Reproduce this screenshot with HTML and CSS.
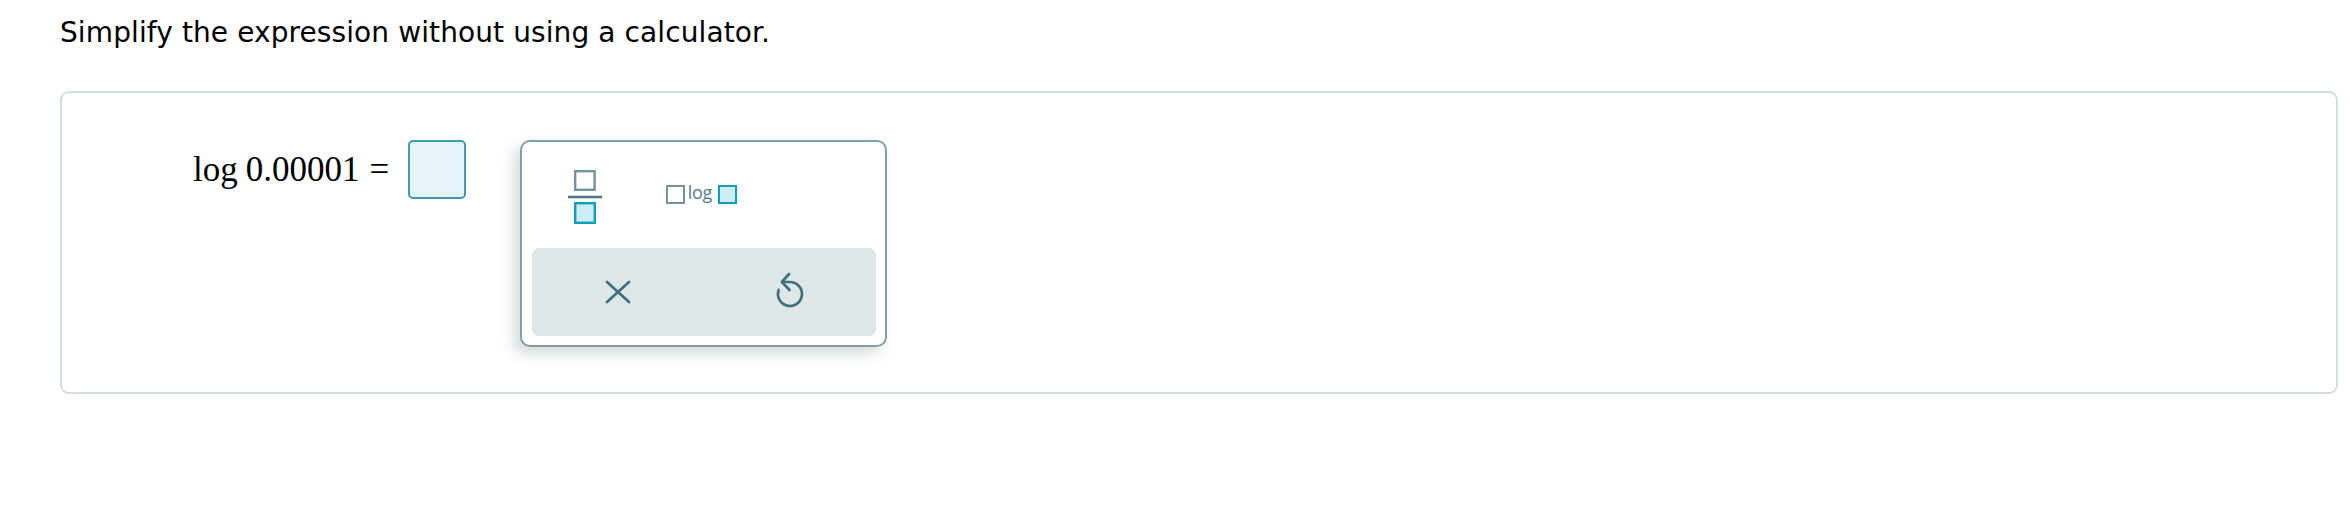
FILE: index.html
```html
<!DOCTYPE html>
<html>
<head>
<meta charset="utf-8">
<link rel="stylesheet" href="styles.css">
</head>
<body>
<div class="page">
  <p class="title">Simplify the expression without using a calculator.</p>
  <div class="panel">
    <div class="row">
      <div class="math"><span class="fn">log</span><span class="num">0.00001</span><span class="eq">=</span></div>
      <div class="answer"></div>
      <div class="palette">
        <div class="tools">
          <div class="tool">
            <svg class="frac" width="36" height="57" viewBox="0 0 36 57">
              <rect x="8.2" y="2.2" width="19.4" height="18.6" fill="#fff" stroke="#76939b" stroke-width="2.4"/>
              <line x1="1" y1="28" x2="35" y2="28" stroke="#4d7280" stroke-width="2.6"/>
              <rect x="8.2" y="34.2" width="19.6" height="19.6" fill="#cdeef4" stroke="#0d9fb7" stroke-width="2.4"/>
            </svg>
          </div>
          <div class="tool">
            <span class="logicon"><span class="bx base"></span><span class="lg">log</span><span class="bx arg"></span></span>
          </div>
          <div class="tool"></div>
        </div>
        <div class="actions">
          <div class="act">
            <svg width="26" height="24" viewBox="0 0 26 24">
              <path d="M2 2 L24 22 M24 2 L2 22" stroke="#3f6f7e" stroke-width="2.7" stroke-linecap="round" fill="none"/>
            </svg>
          </div>
          <div class="act">
            <svg width="32" height="40" viewBox="0 0 32 40">
              <path d="M8 12 H16 A12 12 0 1 1 4.7 19.9" stroke="#3f6f7e" stroke-width="2.7" stroke-linecap="round" fill="none"/>
              <path d="M15 4 L8 12 L15.5 20" stroke="#3f6f7e" stroke-width="2.7" stroke-linecap="round" stroke-linejoin="round" fill="none"/>
            </svg>
          </div>
        </div>
      </div>
    </div>
  </div>
</div>
</body>
</html>
```
FILE: styles.css
```css
html, body {
  margin: 0;
  background: #ffffff;
}
body {
  font-family: "DejaVu Sans", Verdana, sans-serif;
  color: #000;
}
.page {
  padding: 16px 12px 0 60px;
}
.title {
  margin: 0;
  font-size: 28px;
  line-height: 34px;
  letter-spacing: 0.1px;
}
.panel {
  margin-top: 41px;
  height: 303px;
  box-sizing: border-box;
  border: 2px solid #d4dee1;
  border-radius: 9px;
  padding: 47px 0 0 131px;
}
.row {
  display: flex;
  align-items: flex-start;
}
.math {
  margin-top: 10px;
  font-family: "Liberation Serif", "Times New Roman", serif;
  font-size: 35px;
  line-height: 40px;
  white-space: nowrap;
  color: #000;
}
.fn {
  margin-right: 8px;
}
.eq {
  margin-left: 10px;
}
.answer {
  margin-left: 19px;
  width: 58px;
  height: 59px;
  box-sizing: border-box;
  border: 2px solid #3d9cad;
  border-radius: 5px;
  background: #e4f4f8;
}
.palette {
  margin-left: 54px;
  width: 367px;
  height: 207px;
  box-sizing: border-box;
  border: 2px solid #809ea6;
  border-radius: 10px;
  background: #fff;
  box-shadow: -6px 7px 14px rgba(50, 75, 85, 0.2);
  padding: 0 9px 9px 10px;
  display: flex;
  flex-direction: column;
}
.tools {
  height: 106px;
  display: flex;
  align-items: center;
}
.tool {
  width: 114px;
  display: flex;
  justify-content: center;
  align-items: center;
}
.tool:first-child {
  width: 108px;
}
.tool:nth-child(2) {
  width: 132px;
}
.frac {
  display: block;
  margin-top: 4px;
}
.logicon {
  display: inline-flex;
  align-items: center;
  margin-top: -2px;
}
.bx {
  width: 19px;
  height: 19px;
  box-sizing: border-box;
  border: 2.5px solid #76939b;
  background: #fff;
}
.bx.arg {
  border-color: #0d9fb7;
  background: #cdeef4;
}
.lg {
  font-family: "Open Sans", "DejaVu Sans", sans-serif;
  font-size: 18px;
  line-height: 19px;
  letter-spacing: -0.4px;
  color: #537b88;
  margin: -3px 6px 0 3px;
}
.actions {
  flex: 1;
  display: flex;
  background: #dfe6e8;
  border-radius: 7px;
}
.act {
  flex: 1;
  display: flex;
  justify-content: center;
  align-items: center;
}
.act svg {
  display: block;
}
.act:last-child svg {
  margin-top: -4px;
}
```
